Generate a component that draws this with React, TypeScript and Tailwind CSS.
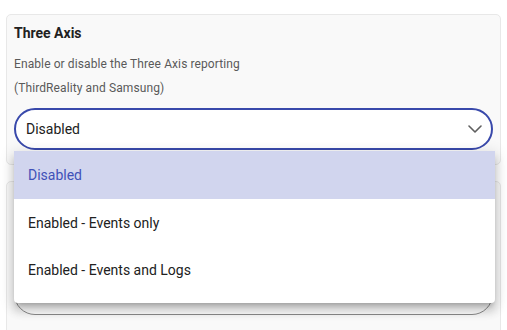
import React from "react";

function Chevron() {
  return (
    <svg width="14" height="8" viewBox="0 0 14 8" fill="none">
      <path d="M1 1 L7 7 L13 1" stroke="#5f5f5f" strokeWidth="1.6" strokeLinecap="round" strokeLinejoin="round" />
    </svg>
  );
}

export default function App() {
  const font = { fontFamily: "Roboto, 'Liberation Sans', sans-serif" };
  return (
    <div className="relative w-[507px] h-[330px] overflow-hidden bg-white" style={font}>
      <div className="flex flex-col gap-[16px] pt-[14px] px-[6px]">
        {/* Card 1 */}
        <div className="border border-[#e8e8e8] rounded-[5px] bg-[#f9f9f9] pt-[8px] pb-[14px] px-[7px]">
          <div className="text-[14px] leading-[20px] font-bold text-[#212121]">Three Axis</div>
          <div className="mt-[9px] text-[12px] leading-[24px] text-[#5a5a5a] tracking-[0.1px]">
            <div>Enable or disable the Three Axis reporting</div>
            <div>(ThirdReality and Samsung)</div>
          </div>
          <div className="mt-[8px] h-[42px] w-[479px] rounded-[21px] border-2 border-[#3949ab] bg-white flex items-center justify-between pl-[10px] pr-[9px]">
            <span className="text-[14px] text-[#212121]">Disabled</span>
            <Chevron />
          </div>
        </div>
        {/* Card 2 (mostly covered by the open menu) */}
        <div className="border border-[#e8e8e8] rounded-[5px] bg-[#f9f9f9] pt-[91px] pb-[14px] px-[7px] h-[200px]">
          <div className="h-[42px] w-[479px] rounded-[21px] border border-[#8a8a8a] bg-white" />
        </div>
      </div>
      {/* Menu */}
      <div
        className="absolute left-[14px] top-[151px] w-[481px] bg-white rounded-b-[4px] pb-[9px]"
        style={{ boxShadow: "0px 5px 5px -3px rgba(0,0,0,0.2), 0px 8px 10px 1px rgba(0,0,0,0.14), 0px 3px 14px 2px rgba(0,0,0,0.12)" }}
      >
        <div className="h-[48px] flex items-center px-[14px] bg-[#d1d5ee] text-[14px] text-[#4051b8]">Disabled</div>
        <div className="h-[48px] flex items-center px-[14px] text-[14px] text-[#212121]">Enabled - Events only</div>
        <div className="h-[47px] flex items-center px-[14px] text-[14px] text-[#212121]">Enabled - Events and Logs</div>
      </div>
    </div>
  );
}
